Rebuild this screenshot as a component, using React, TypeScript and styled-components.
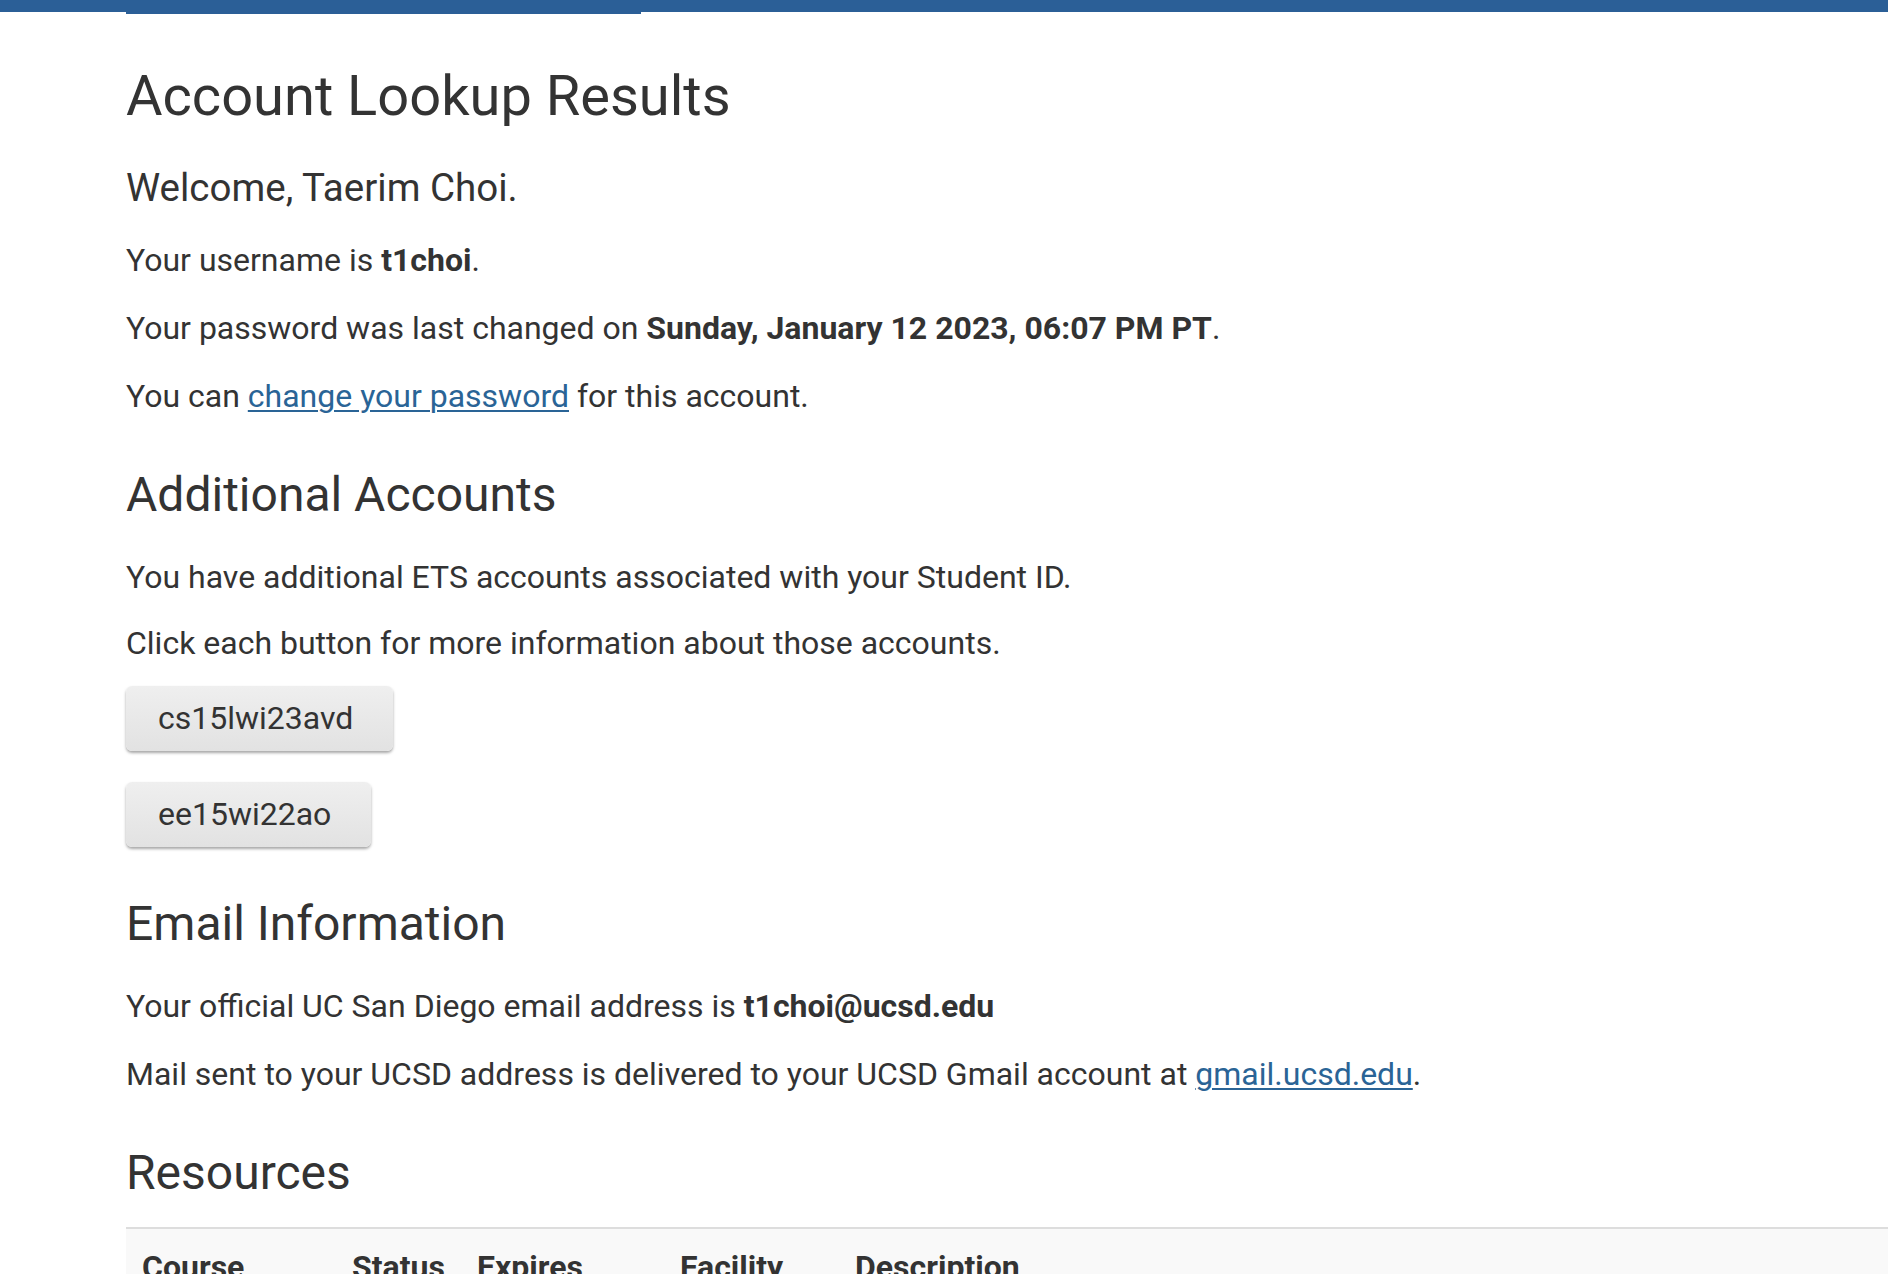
import React from "react";
import styled, { createGlobalStyle } from "styled-components";

const GlobalStyle = createGlobalStyle`
  html, body {
    margin: 0;
    padding: 0;
    background: #ffffff;
  }
  body {
    font-family: Roboto, "Liberation Sans", Arial, sans-serif;
    color: #333333;
    overflow-x: hidden;
  }
`;

const TopBar = styled.header`
  display: flex;
  align-items: flex-start;
  height: 12px;
  padding-left: 126px;
  background: #2b5f97;
`;

const ActiveTab = styled.div`
  width: 515px;
  height: 14px;
  flex: none;
  background: #2b5f97;
`;

const Main = styled.main`
  display: flex;
  flex-direction: column;
  align-items: flex-start;
  padding: 0 0 0 126px;
`;

const Title = styled.h1`
  margin: 52px 0 0;
  font-size: 56px;
  line-height: 64px;
  font-weight: 400;
  color: #333;
`;

const Lead = styled.p`
  margin: 36px 0 0;
  font-size: 38.5px;
  line-height: 48px;
  font-weight: 400;
`;

const SectionTitle = styled.h2`
  margin: 49px 0 0;
  font-size: 48px;
  line-height: 56px;
  font-weight: 400;
  color: #333;
`;

const Para = styled.p<{ $gap?: number }>`
  margin: ${(p) => p.$gap ?? 24}px 0 0;
  font-size: 32px;
  line-height: 44px;
  white-space: nowrap;
`;

const Link = styled.a`
  color: #2a6496;
  text-decoration: underline;
  text-underline-offset: 3px;
  text-decoration-thickness: 2px;
`;

const ButtonStack = styled.div`
  display: flex;
  flex-direction: column;
  align-items: flex-start;
  gap: 31px;
  margin-top: 21px;
`;

const AccountButton = styled.button`
  font-family: Roboto, "Liberation Sans", Arial, sans-serif;
  font-size: 32px;
  line-height: 41px;
  color: #333;
  padding: 12px 40px 12px 32px;
  border: none;
  border-radius: 6px;
  background: linear-gradient(#efefef, #e2e2e2);
  box-shadow: 0 2px 3px rgba(0, 0, 0, 0.35);
  cursor: pointer;
`;

const Table = styled.table`
  margin-top: 26px;
  width: calc(100vw - 126px);
  border-collapse: collapse;
  font-size: 32px;
  line-height: 44px;
`;

const HeadRow = styled.tr`
  background: #f9f9f9;
  border-top: 2px solid #dddddd;
`;

const HeadCell = styled.th<{ $w?: number }>`
  text-align: left;
  font-weight: 700;
  padding: 16px 16px;
  ${(p) => (p.$w ? `width: ${p.$w}px;` : "")}
  box-sizing: border-box;
  color: #333;
`;

export default function App() {
  return (
    <>
      <GlobalStyle />
      <TopBar>
        <ActiveTab />
      </TopBar>
      <Main>
        <Title>Account Lookup Results</Title>
        <Lead>Welcome, Taerim Choi.</Lead>
        <Para $gap={26}>
          Your username is <strong>t1choi</strong>.
        </Para>
        <Para>
          Your password was last changed on{" "}
          <strong>Sunday, January 12 2023, 06:07 PM PT</strong>.
        </Para>
        <Para>
          You can <Link href="#">change your password</Link> for this account.
        </Para>

        <SectionTitle>Additional Accounts</SectionTitle>
        <Para $gap={32}>
          You have additional ETS accounts associated with your Student ID.
        </Para>
        <Para $gap={22}>
          Click each button for more information about those accounts.
        </Para>
        <ButtonStack>
          <AccountButton>cs15lwi23avd</AccountButton>
          <AccountButton>ee15wi22ao</AccountButton>
        </ButtonStack>

        <SectionTitle>Email Information</SectionTitle>
        <Para $gap={32}>
          Your official UC San Diego email address is{" "}
          <strong>t1choi@ucsd.edu</strong>
        </Para>
        <Para>
          Mail sent to your UCSD address is delivered to your UCSD Gmail account
          at <Link href="#">gmail.ucsd.edu</Link>.
        </Para>

        <SectionTitle>Resources</SectionTitle>
        <Table>
          <thead>
            <HeadRow>
              <HeadCell $w={210}>Course</HeadCell>
              <HeadCell $w={125}>Status</HeadCell>
              <HeadCell $w={203}>Expires</HeadCell>
              <HeadCell $w={175}>Facility</HeadCell>
              <HeadCell>Description</HeadCell>
            </HeadRow>
          </thead>
        </Table>
      </Main>
    </>
  );
}
